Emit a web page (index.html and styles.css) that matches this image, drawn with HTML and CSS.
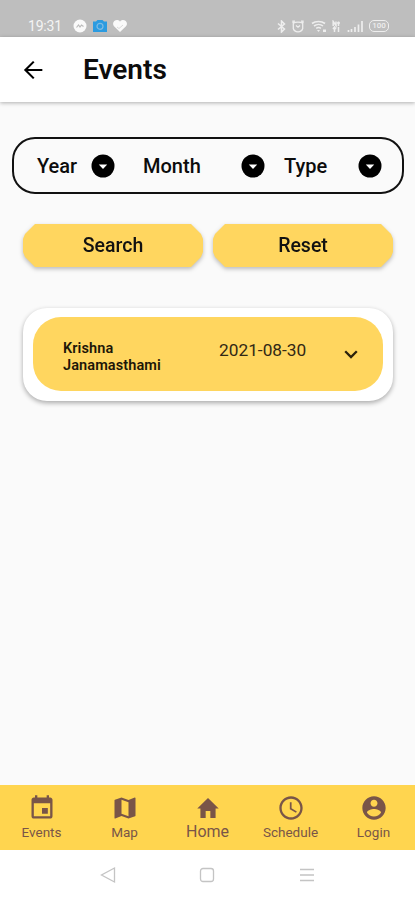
FILE: index.html
```html
<!DOCTYPE html>
<html lang="en">
<head>
  <meta charset="UTF-8" />
  <meta name="viewport" content="width=device-width, initial-scale=1" />
  <title>Events</title>
  <link rel="stylesheet" href="styles.css">
</head>
<body>
  <div class="statusbar">
    <span class="time">19:31</span>
    <svg class="s-chat" width="14" height="14" viewBox="0 0 14 14"><circle cx="7" cy="7" r="6.5" fill="#fafafa"/><path d="M3.500 8.500l2-2.500 1.500 2 1.500-2 2 1.500" fill="none" stroke="#bbb" stroke-width="1.200"/></svg>
    <svg class="s-camera" width="16" height="14" viewBox="0 0 16 14"><path d="M1 2.5h3L5.5 1h5L12 2.5h3V13H1z" fill="#2b9be0"/><circle cx="8" cy="7.3" r="3" fill="none" stroke="#7dbbe4" stroke-width="1.2"/></svg>
    <svg class="s-heart" width="16" height="14" viewBox="0 0 16 14"><path d="M8 13L2 7.3C-.5 4 2.5.8 5.4 1.1 6.8 1.2 7.6 2 8 2.7c.5-.8 1.4-1.5 2.7-1.6 3-.2 5.8 3 3.3 6.2z" fill="#fafafa"/><path d="M5 8l2 1.500L11 6" fill="none" stroke="#d0d0d0" stroke-width=".8"/></svg>
    <div class="status-right">
      <svg width="9" height="13" viewBox="0 0 9 13"><path d="M1 3.5l6.5 5.5-3 3V1l3 3L1 9.5" fill="none" stroke="#eee" stroke-width="1.5"/></svg>
      <svg class="s-alarm" width="12" height="13" viewBox="0 0 12 13"><path d="M1 3V1.2h2M11 3V1.2H9M1.3 3.2C3 1.8 9 1.8 10.7 3.2v5.3C10 11 8.5 11.8 6 11.8S2 11 1.3 8.5zM4 5.5l2 1.700 2-1.700" fill="none" stroke="#eee" stroke-width="1.3"/></svg>
      <svg class="s-wifi" width="17" height="13" viewBox="0 0 17 13"><path d="M1 3.5C4.5.8 10.5.8 14 3.500M3 6c2.700-2 6.500-2 9 0M5.200 8.300c1.500-1 3.300-1 4.700 0" fill="none" stroke="#eee" stroke-width="1.600"/><path d="M6 10h3l-1.500 2zM12 9.500h3V12h-3z" fill="#eee"/></svg>
      <svg class="s-data" width="9" height="13" viewBox="0 0 9 13"><path d="M1.200 6V1.500L4 5.500V1.500M5 3h3M6.500 1.500V6M2.500 7v5M1 9l1.500-2L4 9M6.500 7v5" fill="none" stroke="#eee" stroke-width="1.500"/></svg>
      <svg class="s-signal" width="16" height="13" viewBox="0 0 16 13"><path d="M1.500 10v2M4.500 9v3M8 7v5M11.500 4.500V12M15 1v11" stroke="#eee" stroke-width="1.700"/></svg>
      <span class="battery">100</span>
    </div>
  </div>

  <header class="appbar">
    <svg width="28" height="28" viewBox="0 0 24 24"><path d="M20 11.100H7.600l5.700-5.700L12 4.200 4.200 12l7.800 7.800 1.300-1.200-5.700-5.700H20z"/></svg>
    <h1>Events</h1>
  </header>

  <main>
    <div class="filters">
      <div class="filter year"><span>Year</span><svg width="24" height="24" viewBox="0 0 24 24"><circle cx="12" cy="12" r="11.5"/><path d="M7.8 10.5h8.4L12 15z" fill="#fff"/></svg></div>
      <div class="filter month"><span>Month</span><svg width="24" height="24" viewBox="0 0 24 24"><circle cx="12" cy="12" r="11.5"/><path d="M7.8 10.5h8.4L12 15z" fill="#fff"/></svg></div>
      <div class="filter type"><span>Type</span><svg width="24" height="24" viewBox="0 0 24 24"><circle cx="12" cy="12" r="11.5"/><path d="M7.8 10.5h8.4L12 15z" fill="#fff"/></svg></div>
    </div>

    <div class="actions">
      <div class="btn-wrap"><button class="btn">Search</button></div>
      <div class="btn-wrap"><button class="btn">Reset</button></div>
    </div>

    <div class="card">
      <div class="event">
        <div class="event-name">Krishna<br>Janamasthami</div>
        <div class="event-date">2021-08-30</div>
        <svg width="24" height="24" viewBox="0 0 24 24"><path d="M6.2 9.3l5.8 5.8 5.8-5.8" fill="none" stroke="#2b210c" stroke-width="2.3"/></svg>
      </div>
    </div>
  </main>

  <nav class="tabs">
    <a class="tab">
      <svg width="28" height="28" viewBox="0 0 24 24"><path d="M17 12h-5v5h5v-5zM16 1v2H8V1H6v2H5c-1.110 0-1.990.9-1.990 2L3 19c0 1.100.89 2 2 2h14c1.100 0 2-.9 2-2V5c0-1.100-.9-2-2-2h-1V1h-2zm3 18H5V8h14v11z"/></svg>
      <span>Events</span>
    </a>
    <a class="tab">
      <svg width="28" height="28" viewBox="0 0 24 24"><path d="M20.500 3l-.16.03L15 5.100 9 3 3.360 4.900c-.21.070-.36.250-.36.480V20.500c0 .28.220.5.500.5l.16-.03L9 18.900l6 2.100 5.640-1.900c.21-.07.36-.25.36-.48V3.500c0-.28-.22-.5-.5-.5zM15 19l-6-2.110V5l6 2.110V19z"/></svg>
      <span>Map</span>
    </a>
    <a class="tab active">
      <svg width="28" height="28" viewBox="0 0 24 24"><path d="M10 20.500v-6h4v6h4.500V12.500h2.700L12 3.500l-9.200 9h2.700v8z"/></svg>
      <span>Home</span>
    </a>
    <a class="tab">
      <svg width="28" height="28" viewBox="0 0 24 24"><path d="M11.990 2C6.470 2 2 6.480 2 12s4.470 10 9.990 10C17.520 22 22 17.520 22 12S17.520 2 11.990 2zM12 20c-4.420 0-8-3.580-8-8s3.580-8 8-8 8 3.580 8 8-3.580 8-8 8zm.5-13H11v6l5.250 3.150.75-1.230-4.500-2.670z"/></svg>
      <span>Schedule</span>
    </a>
    <a class="tab">
      <svg width="28" height="28" viewBox="0 0 24 24"><path d="M12 2C6.480 2 2 6.480 2 12s4.480 10 10 10 10-4.480 10-10S17.520 2 12 2zm0 3c1.660 0 3 1.340 3 3s-1.340 3-3 3-3-1.340-3-3 1.340-3 3-3zm0 14.200c-2.500 0-4.710-1.280-6-3.220.03-1.990 4-3.080 6-3.080 1.990 0 5.970 1.090 6 3.080-1.290 1.940-3.500 3.220-6 3.220z"/></svg>
      <span>Login</span>
    </a>
  </nav>

  <div class="sysnav">
    <svg width="18" height="18" viewBox="0 0 18 18"><path d="M15.500 2v14L2.500 9z"/></svg>
    <svg width="18" height="18" viewBox="0 0 18 18"><rect x="2.500" y="2.500" width="13" height="13" rx="2.500"/></svg>
    <svg width="18" height="18" viewBox="0 0 18 18"><path d="M2 3.500h14M2 9h14M2 14.500h14"/></svg>
  </div>
</body>
</html>
```
FILE: styles.css
```css
* {
  box-sizing: border-box;
}
body {
  margin: 0;
  height: 900px;
  display: flex;
  flex-direction: column;
  background: #fafafa;
  color: #0c0c0c;
  font-family: Roboto, "Liberation Sans", sans-serif;
  overflow: hidden;
}
svg {
  display: block;
  flex: none;
}

/* status bar */
.statusbar {
  height: 37px;
  padding: 15px 26px 0 28px;
  display: flex;
  align-items: center;
  background: #bebebe;
}
.time {
  width: 45px;
  color: #f4f4f4;
  font-size: 14px;
  letter-spacing: -0.2px;
}
.s-camera {
  margin-left: 5px;
}
.s-heart {
  margin-left: 4px;
}
.status-right {
  margin-left: auto;
  display: flex;
  align-items: center;
}
.s-alarm {
  margin-left: 6px;
}
.s-wifi {
  margin-left: 7px;
}
.s-data {
  margin-left: 4px;
}
.s-signal {
  margin-left: 6px;
}
.battery {
  width: 20px;
  height: 12px;
  margin-left: 6px;
  border: 1.5px solid #eee;
  border-radius: 5px;
  color: #eee;
  font-size: 8px;
  font-weight: 500;
  line-height: 10px;
  text-align: center;
}

/* header */
.appbar {
  height: 65px;
  padding: 0 19px;
  display: flex;
  align-items: center;
  gap: 36px;
  background: #fff;
  box-shadow: 0 1px 4px rgba(0, 0, 0, 0.3);
}
.appbar h1 {
  margin: 0;
  font-size: 28px;
  font-weight: 600;
}

main {
  flex: 1;
  padding: 35px 12px 0;
}
.filters {
  height: 57px;
  width: 392px;
  padding: 0 20px 0 23px;
  display: flex;
  align-items: center;
  border: 2px solid #111;
  border-radius: 23px;
}
.filter {
  display: flex;
  align-items: center;
  justify-content: space-between;
  font-size: 20px;
  font-weight: 500;
}
.year {
  width: 78px;
}
.month {
  width: 122px;
  margin-left: 28px;
}
.type {
  width: 98px;
  margin-left: 19px;
}

.actions {
  margin: 30px 10px 0 11px;
  display: flex;
  gap: 10px;
}
.btn-wrap {
  flex: 1;
  filter: drop-shadow(0 2px 2px rgba(0, 0, 0, 0.25));
}
.btn {
  display: block;
  width: 100%;
  height: 43px;
  padding: 0 0 1px;
  border: none;
  background: #ffd65f;
  color: #111;
  font-family: inherit;
  font-size: 19.5px;
  font-weight: 500;
  clip-path: polygon(12px 0, calc(100% - 12px) 0, calc(100% - 2px) 10px, 100% 15px, 100% calc(100% - 15px), calc(100% - 2px) calc(100% - 10px), calc(100% - 12px) 100%, 12px 100%, 2px calc(100% - 10px), 0 calc(100% - 15px), 0 15px, 2px 10px);
}

.card {
  margin: 41px 10px 0 11px;
  padding: 9px 10px 10px;
  background: #fff;
  border-radius: 24px;
  box-shadow: 0 2px 5px rgba(0, 0, 0, 0.33);
}
.event {
  height: 74px;
  padding: 0 20px 0 30px;
  display: flex;
  align-items: center;
  background: #ffd65f;
  border-radius: 28px;
}
.event-name {
  width: 156px;
  margin-top: 6px;
  color: #1d1608;
  font-size: 14.5px;
  font-weight: 600;
  line-height: 17px;
  letter-spacing: 0.1px;
}
.event-date {
  margin-top: -8px;
  color: #322815;
  font-size: 17.3px;
}
.event svg {
  margin-left: auto;
}

/* bottom navigation */
.tabs {
  height: 65px;
  display: flex;
  background: #ffd54f;
}
.tab {
  flex: 1;
  padding-top: 9px;
  display: flex;
  flex-direction: column;
  align-items: center;
  color: #795548;
  font-size: 13.5px;
}
.tab svg {
  fill: #795548;
}
.tab span {
  line-height: 20px;
}
.active {
  font-size: 16px;
}

.sysnav {
  height: 50px;
  padding-right: 1px;
  display: flex;
  justify-content: center;
  align-items: center;
  gap: 81.5px;
  background: #fff;
}
.sysnav svg {
  fill: none;
  stroke: #c4c4c4;
  stroke-width: 1.3;
}
```
